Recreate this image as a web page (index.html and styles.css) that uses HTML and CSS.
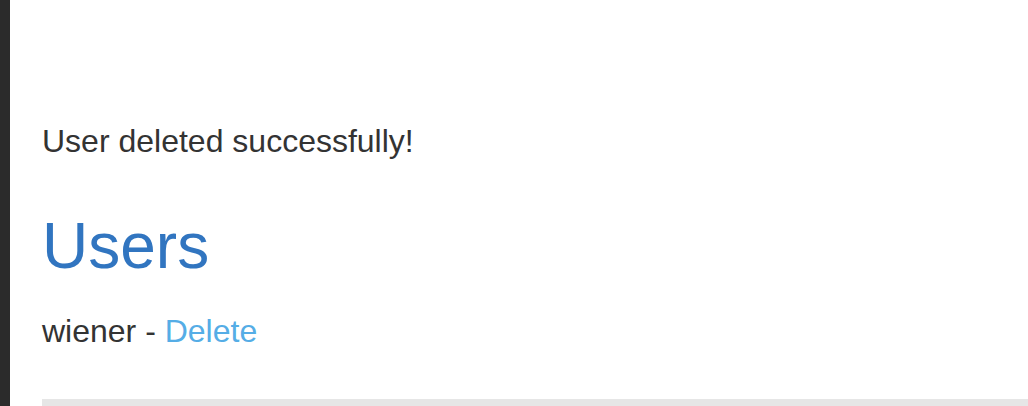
FILE: index.html
```html
<!DOCTYPE html>
<html lang="en">
<head>
    <meta charset="UTF-8">
    <title>Users</title>
    <link rel="stylesheet" href="styles.css">
</head>
<body>
    <div class="page">
        <div class="sidebar"></div>
        <div class="content">
            <p class="notice">User deleted successfully!</p>
            <h1>Users</h1>
            <p class="user-row">wiener - <a href="#">Delete</a></p>
            <hr class="divider">
        </div>
    </div>
</body>
</html>
```
FILE: styles.css
```css
* {
    margin: 0;
    padding: 0;
    box-sizing: border-box;
}

body {
    font-family: "Liberation Sans", Arial, sans-serif;
    font-size: 32px;
    line-height: 46px;
    color: #333;
    background: #fff;
    overflow: hidden;
}

.page {
    display: flex;
    min-height: 406px;
}

.sidebar {
    width: 10px;
    flex-shrink: 0;
    background: #2b2b2b;
}

.content {
    flex: 1;
    padding: 118px 0 0 32px;
}

.notice {
    margin-bottom: 47px;
}

h1 {
    font-size: 64px;
    line-height: 70px;
    font-weight: normal;
    color: #3175c0;
    margin-bottom: 27px;
}

.user-row a {
    color: #55ade6;
    text-decoration: none;
}

.divider {
    margin-top: 45px;
    border: none;
    height: 8px;
    background: #e6e6e6;
}
```
